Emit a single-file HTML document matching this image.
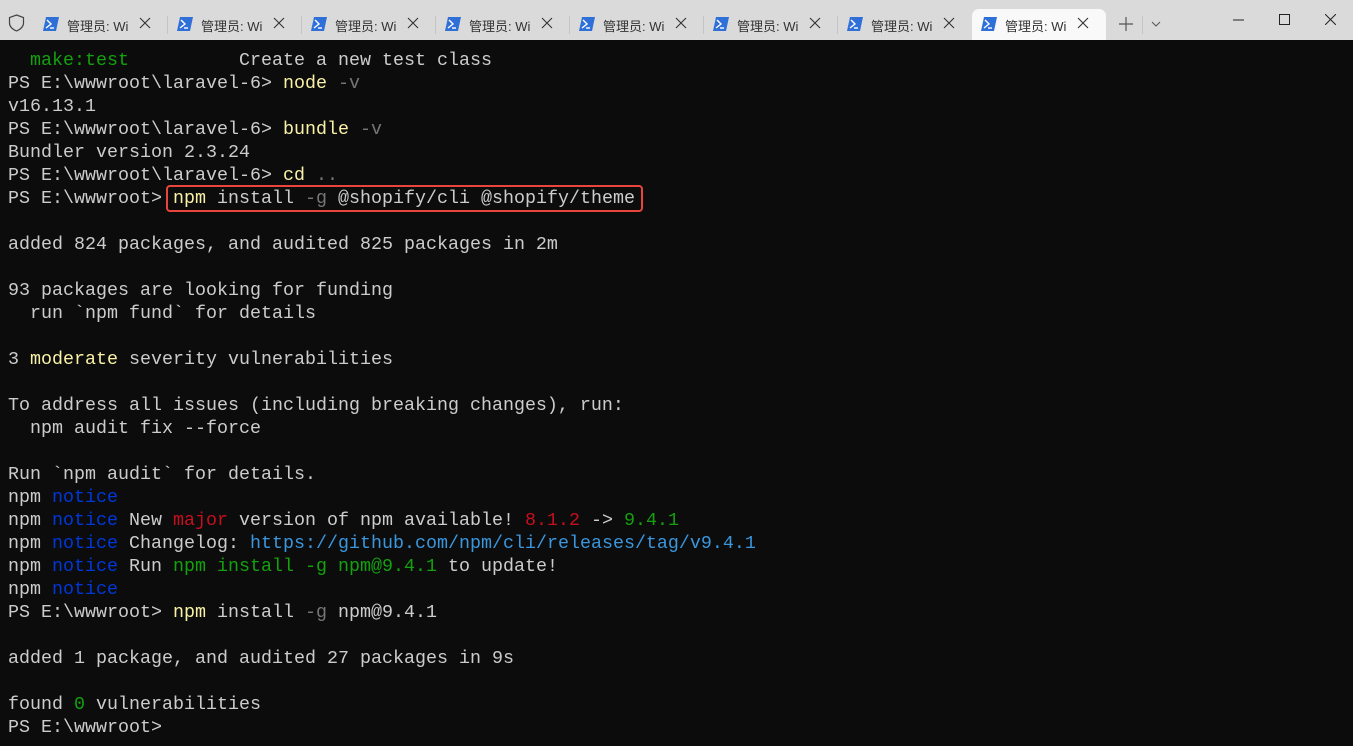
<!DOCTYPE html>
<html><head><meta charset="utf-8"><style>
*{margin:0;padding:0;box-sizing:border-box}
body{width:1353px;height:746px;background:#0c0c0c;overflow:hidden;position:relative;font-family:"Liberation Mono",monospace}
#bar{position:absolute;left:0;top:0;width:1353px;height:40px;background:#dadada}
.tab{position:absolute;top:9px;height:31px;width:134px;font:13px "Liberation Sans","Noto Sans CJK SC",sans-serif;color:#333}
.tab.act{background:#f9f9f9;border-radius:7px 7px 0 0}
.tab .ic{position:absolute;left:9px;top:8px}
.tab .t{position:absolute;left:33px;top:7px;width:62px;overflow:hidden;white-space:nowrap}
.tab .x{position:absolute;left:104px;top:7px}
.sep{position:absolute;top:16px;width:1px;height:18px;background:#c4c4c4}
#term{position:absolute;left:8px;top:49px;font-size:18.33px;line-height:23px;color:#cccccc;white-space:pre}
.g{color:#13a10e}.y{color:#f9f1a5}.d{color:#767676}.b{color:#0037da}.r{color:#c50f1f}.l{color:#3a96dd}
#box{position:absolute;left:166px;top:185px;width:477px;height:27px;border:2px solid #e8463d;border-radius:4px}
</style></head><body>
<div id="bar">
<svg style="position:absolute;left:8px;top:14px" width="17" height="18" viewBox="0 0 17 18"><path d="M8.5 1 L15.5 3.5 V9 C15.5 13 12 15.5 8.5 17 C5 15.5 1.5 13 1.5 9 V3.5 Z" fill="none" stroke="#444" stroke-width="1.2"/></svg>
<div id="tabs"></div>
<svg style="position:absolute;left:1119px;top:17px" width="14" height="14"><path d="M7 0V14M0 7H14" stroke="#555" stroke-width="1.2"/></svg>
<div class="sep" style="left:1142px"></div>
<svg style="position:absolute;left:1151px;top:21px" width="10" height="6"><path d="M1 1L5 5L9 1" fill="none" stroke="#555" stroke-width="1"/></svg>
<svg style="position:absolute;left:1233px;top:19px" width="11" height="2"><path d="M0 1H11" stroke="#222" stroke-width="1"/></svg>
<svg style="position:absolute;left:1279px;top:14px" width="11" height="11"><rect x=".5" y=".5" width="10" height="10" fill="none" stroke="#222"/></svg>
<svg style="position:absolute;left:1325px;top:14px" width="11" height="11"><path d="M0 0L11 11M11 0L0 11" stroke="#222" stroke-width="1"/></svg>
</div>
<div id="term"><span class="g">  make:test</span>          Create a new test class
PS E:\wwwroot\laravel-6> <span class="y">node</span> <span class="d">-v</span>
v16.13.1
PS E:\wwwroot\laravel-6> <span class="y">bundle</span> <span class="d">-v</span>
Bundler version 2.3.24
PS E:\wwwroot\laravel-6> <span class="y">cd</span> <span class="d">..</span>
PS E:\wwwroot> <span class="y">npm</span> install <span class="d">-g</span> @shopify/cli @shopify/theme

added 824 packages, and audited 825 packages in 2m

93 packages are looking for funding
  run `npm fund` for details

3 <span class="y">moderate</span> severity vulnerabilities

To address all issues (including breaking changes), run:
  npm audit fix --force

Run `npm audit` for details.
npm <span class="b">notice</span>
npm <span class="b">notice</span> New <span class="r">major</span> version of npm available! <span class="r">8.1.2</span> -&gt; <span class="g">9.4.1</span>
npm <span class="b">notice</span> Changelog: <span class="l">https://github.com/npm/cli/releases/tag/v9.4.1</span>
npm <span class="b">notice</span> Run <span class="g">npm install -g npm@9.4.1</span> to update!
npm <span class="b">notice</span>
PS E:\wwwroot> <span class="y">npm</span> install <span class="d">-g</span> npm@9.4.1

added 1 package, and audited 27 packages in 9s

found <span class="g">0</span> vulnerabilities
PS E:\wwwroot></div>
<div id="box"></div>
<script>
var h='';
for(var i=0;i<8;i++){var L=34+i*134;
h+='<div class="tab'+(i==7?' act':'')+'" style="left:'+L+'px"><svg class="ic" width="16" height="14" viewBox="0 0 16 14"><path d="M3 0H16L13 14H0Z" fill="#2f6fd8"/><path d="M4 3L8 7L3 11" fill="none" stroke="#fff" stroke-width="1.4"/><path d="M7 11H11" stroke="#fff" stroke-width="1.4"/></svg><span class="t">管理员: Windows PowerShell</span><svg class="x" width="14" height="14"><path d="M2 2L12 12M12 2L2 12" stroke="#333" stroke-width="1.1"/></svg></div>';
if(i<7&&i!=6)h+='<div class="sep" style="left:'+(L+133)+'px"></div>';}
document.getElementById('tabs').innerHTML=h;
</script>
</body></html>
